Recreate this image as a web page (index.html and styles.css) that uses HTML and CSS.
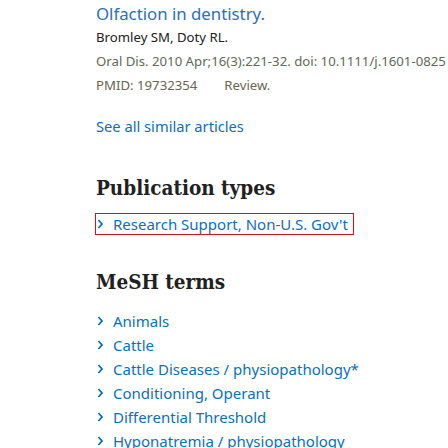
FILE: index.html
```html
<!DOCTYPE html>
<html>
<head>
<meta charset="utf-8">
<link rel="stylesheet" href="styles.css">
</head>
<body>
<div class="page">
  <div class="docsum">
    <a class="docsum-title" href="#">Olfaction in dentistry.</a>
    <div class="authors">Bromley SM, Doty RL.</div>
    <div class="citation">Oral Dis. 2010 Apr;16(3):221-32. doi: 10.1111/j.1601-0825</div>
    <div class="pmid-line"><span class="pmid">PMID: 19732354</span><span class="type">Review.</span></div>
  </div>
  <a class="see-all" href="#">See all similar articles</a>

  <h2 class="section-title pub-title">Publication types</h2>
  <ul class="keywords pub">
    <li class="focused"><svg class="chev" width="6" height="10" viewBox="0 0 6 10"><path d="M1.4 1 L5 5 L1.4 9" fill="none" stroke="#0b6fc0" stroke-width="1.8"/></svg><a href="#">Research Support, Non-U.S. Gov't</a></li>
  </ul>

  <h2 class="section-title mesh-title">MeSH terms</h2>
  <ul class="keywords mesh">
    <li><svg class="chev" width="6" height="10" viewBox="0 0 6 10"><path d="M1.4 1 L5 5 L1.4 9" fill="none" stroke="#0b6fc0" stroke-width="1.8"/></svg><a href="#">Animals</a></li>
    <li><svg class="chev" width="6" height="10" viewBox="0 0 6 10"><path d="M1.4 1 L5 5 L1.4 9" fill="none" stroke="#0b6fc0" stroke-width="1.8"/></svg><a href="#">Cattle</a></li>
    <li><svg class="chev" width="6" height="10" viewBox="0 0 6 10"><path d="M1.4 1 L5 5 L1.4 9" fill="none" stroke="#0b6fc0" stroke-width="1.8"/></svg><a href="#">Cattle Diseases / physiopathology*</a></li>
    <li><svg class="chev" width="6" height="10" viewBox="0 0 6 10"><path d="M1.4 1 L5 5 L1.4 9" fill="none" stroke="#0b6fc0" stroke-width="1.8"/></svg><a href="#">Conditioning, Operant</a></li>
    <li><svg class="chev" width="6" height="10" viewBox="0 0 6 10"><path d="M1.4 1 L5 5 L1.4 9" fill="none" stroke="#0b6fc0" stroke-width="1.8"/></svg><a href="#">Differential Threshold</a></li>
    <li><svg class="chev" width="6" height="10" viewBox="0 0 6 10"><path d="M1.4 1 L5 5 L1.4 9" fill="none" stroke="#0b6fc0" stroke-width="1.8"/></svg><a href="#">Hyponatremia / physiopathology</a></li>
  </ul>
</div>
</body>
</html>
```

FILE: styles.css
```css
html, body {
  margin: 0;
  padding: 0;
  background: #ffffff;
}
body {
  font-family: "Noto Sans", "Open Sans", sans-serif;
  color: #212121;
}
a {
  text-decoration: none;
  color: #0b6fc0;
}
.page {
  padding-left: 96px;
  white-space: nowrap;
  height: 448px;
  overflow: hidden;
}
.docsum {
  display: flex;
  flex-direction: column;
}
.docsum-title {
  font-size: 16.8px;
  line-height: 25px;
  padding-top: 1px;
  color: #2a70bd;
}
.authors {
  font-size: 13.2px;
  line-height: 23px;
  color: #212121;
}
.citation {
  font-size: 13.2px;
  line-height: 24px;
  color: #5e6b55;
}
.pmid-line {
  font-size: 13.2px;
  line-height: 24px;
  color: #6a6550;
}
.pmid-line .type {
  margin-left: 27px;
}
.see-all {
  display: block;
  margin-top: 17px;
  font-size: 14.7px;
  line-height: 24px;
}
.section-title {
  margin: 0;
  font-family: "DejaVu Serif Condensed", "DejaVu Serif", serif;
  font-stretch: condensed;
  font-weight: bold;
  font-size: 20.5px;
  line-height: 28px;
  color: #212121;
}
.pub-title {
  margin-top: 36px;
}
.mesh-title {
  margin-top: 33px;
}
.keywords {
  list-style: none;
  margin: 0;
  padding: 0;
}
.keywords li {
  display: flex;
  align-items: center;
  height: 24px;
  font-size: 15px;
  line-height: 24px;
}
.pub {
  margin-top: 11px;
}
.keywords li.focused {
  box-sizing: border-box;
  width: 259px;
  height: 22px;
  line-height: 20px;
  border: 1px solid #e01010;
  margin-left: -1px;
}
.chev {
  flex: none;
  margin-left: 1px;
  margin-right: 10px;
}
.mesh {
  margin-top: 13px;
}
```
